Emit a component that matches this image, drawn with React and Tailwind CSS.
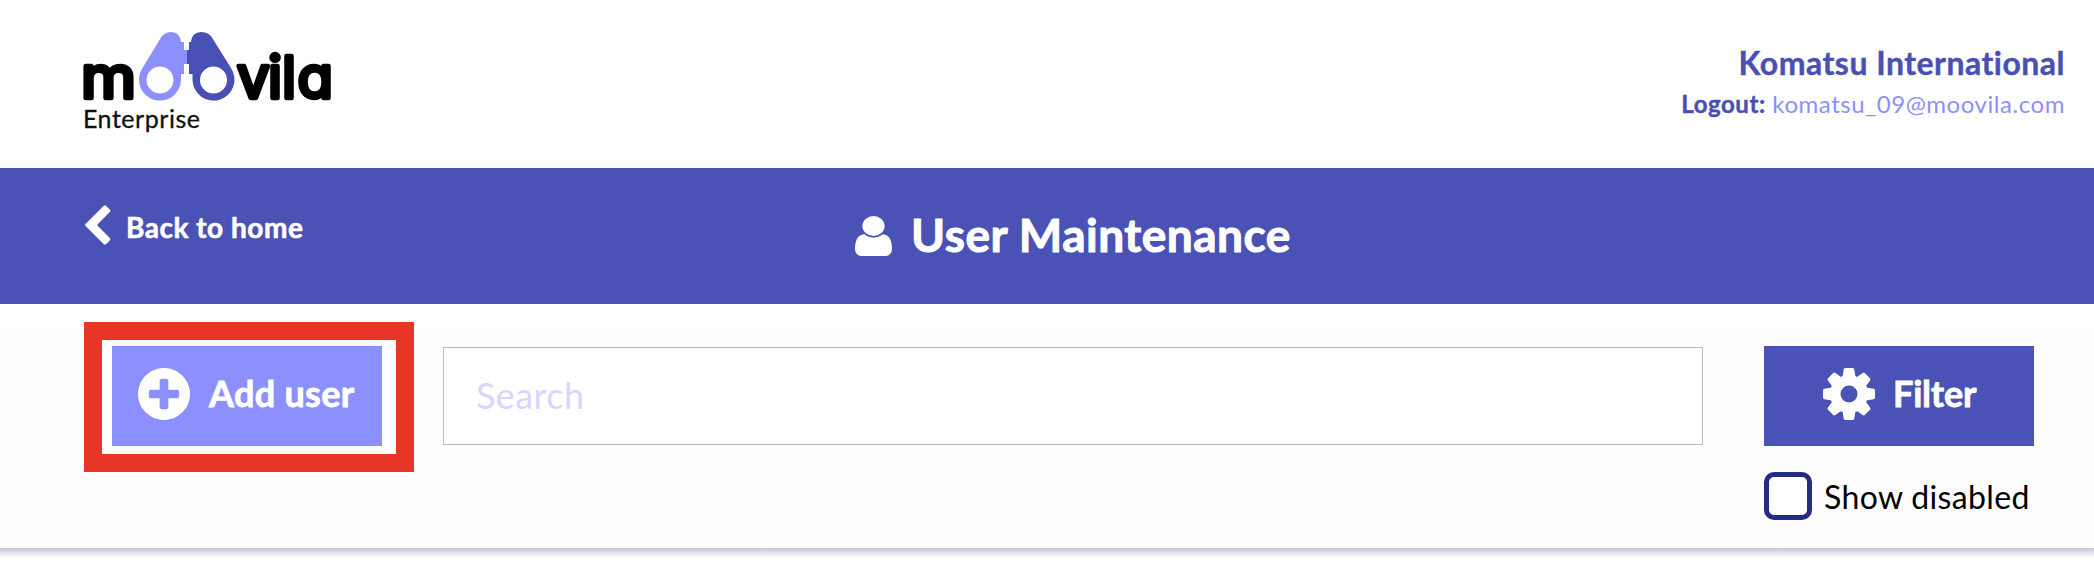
const Icon = ({ d, viewBox, className }) => (
  <svg viewBox={viewBox} className={className} fill="currentColor" aria-hidden="true" preserveAspectRatio="none">
    <path d={d} />
  </svg>
);

const USER =
  'M1536 1399q0 109-62.5 187t-150.5 78h-854q-88 0-150.5-78t-62.5-187q0-85 8.5-160.5t31.5-152 58.5-131 94-89 134.5-34.5q131 128 313 128t313-128q76 0 134.5 34.5t94 89 58.5 131 31.5 152 8.5 160.5zm-256-887q0 159-112.5 271.5t-271.5 112.5-271.5-112.5-112.5-271.5 112.5-271.5 271.5-112.5 271.5 112.5 112.5 271.5z';
const PLUS =
  'M1344 960v-128q0-26-19-45t-45-19h-256v-256q0-26-19-45t-45-19h-128q-26 0-45 19t-19 45v256h-256q-26 0-45 19t-19 45v128q0 26 19 45t45 19h256v256q0 26 19 45t45 19h128q26 0 45-19t19-45v-256h256q26 0 45-19t19-45zm320-64q0 209-103 385.5t-279.5 279.5-385.5 103-385.5-103-279.5-279.5-103-385.5 103-385.5 279.5-279.5 385.5-103 385.5 103 279.5 279.5 103 385.5z';
// One tooth of the symmetric eight-tooth gear, centred on the origin
const TOOTH = 'M-7-14L-5.300-24.500Q-5-26-3.700-26H3.700Q5-26 5.300-24.500L7-14Z';

function Gear({ className }) {
  return (
    <svg viewBox="-26 -26 52 52" className={className} fill="currentColor" aria-hidden="true">
      {[0, 45, 90, 135, 180, 225, 270, 315].map((a) => (
        <path key={a} d={TOOTH} transform={`rotate(${a})`} />
      ))}
      <circle r="13.750" fill="none" stroke="currentColor" strokeWidth="10.500" />
    </svg>
  );
}

function Logo() {
  return (
    <svg viewBox="0 0 252 108" className="h-[108px] w-[252px] overflow-visible" aria-label="moovila Enterprise">
      <g fontFamily="Inter, sans-serif" fontWeight="400" fontSize="58" fill="#000" stroke="#000" strokeWidth="4.500" strokeLinejoin="round" style={{ fontFeatureSettings: '"cv11"' }}>
        <text x="-2" y="68" textLength="55" lengthAdjust="spacingAndGlyphs">m</text>
        <text x="154 185 199 214.500" y="68">vila</text>
      </g>
      <rect x="96" y="21" width="13" height="13" fill="#4950b4" />
      <path fillRule="evenodd" fill="#8c90ff" d="M79 6Q83 2 88 2Q97 2 98 12H101V20H104V34H101V44H98V50A21 21 0 1 1 59.500 38ZM77 36.500A13.500 13.500 0 1 0 77 63.500A13.500 13.500 0 1 0 77 36.500Z" />
      <path fillRule="evenodd" fill="#4950b4" d="M128 6Q124 2 118 2Q109 2 108 12H106V20H104V34H106V44H109.500V50A21 21 0 1 0 148 38ZM130.500 36.500A13.500 13.500 0 1 0 130.500 63.500A13.500 13.500 0 1 0 130.500 36.500Z" />
      <text x="0" y="97.500" fontFamily="Lato, sans-serif" fontWeight="400" fontSize="25" fill="#111" stroke="#111" strokeWidth="0.300" textLength="117">Enterprise</text>
    </svg>
  );
}

export default function App() {
  return (
    <div className="h-[568px] w-[2094px] overflow-hidden bg-white font-['Lato',sans-serif]">
      <header className="flex h-[168px] items-start justify-between pr-[29px] pl-[83px]">
        <div className="pt-[30px]"><Logo /></div>
        <div className="flex flex-col items-end pt-[43px] whitespace-nowrap text-[#4950b4]">
          <div className="text-[32px] leading-[40px] font-bold tracking-[0.48px] [-webkit-text-stroke:0.4px]">Komatsu International</div>
          <div className="mt-px text-2xl leading-[40px] tracking-[0.55px]">
            <span className="font-bold [-webkit-text-stroke:0.4px]">Logout:</span> <span className="text-[#8c90ff]">komatsu_09@moovila.com</span>
          </div>
        </div>
      </header>

      <nav className="grid h-[136px] grid-cols-[855px_1fr] bg-[#4a52b5] whitespace-nowrap text-white">
        <div className="flex items-start pt-[37px] pl-[85px]">
          <svg viewBox="0 0 26 40" className="h-10 w-[26px]" fill="currentColor" aria-hidden="true">
            <path d="M19 .5Q20 0 21 .8L25 4.800Q25.600 6 25 6.800L12 20L25 33.200Q25.600 34.500 25 35.200L21 39.200Q20 40 18.800 39.200L.5 21Q-.2 20 .5 19Z" />
          </svg>
          <span className="mt-[5px] ml-[15px] text-[28px] leading-[34px] font-bold tracking-[0.52px] [-webkit-text-stroke:0.6px]">Back to home</span>
        </div>
        <div className="flex items-start pt-[48px]">
          <Icon d={USER} viewBox="256 128 1280 1536" className="h-10 w-[37px]" />
          <h1 className="-mt-[4px] ml-[19px] text-[46px] leading-[46px] font-bold tracking-[0.5px] [-webkit-text-stroke:1px]">User Maintenance</h1>
        </div>
      </nav>

      <section className="h-[244px] bg-[linear-gradient(#fff_29px,#fbfbfb_29px,#fbfbfb_30px,#fefefe_30px)] pl-[84px]">
        <div className="flex h-full items-start">
          <div className="mt-[18px] h-[150px] w-[330px] border-[18px] border-[#e73526] bg-white pt-[6px] pl-[10px]">
            <button className="flex h-[100px] w-[270px] items-center bg-[#8c90ff] pl-[26px] text-white">
              <Icon d={PLUS} viewBox="128 128 1536 1536" className="-mt-[4px] h-[52px] w-[52px]" />
              <span className="-mt-[7px] ml-[19px] text-4xl font-bold tracking-[0.3px] [-webkit-text-stroke:0.8px]">Add user</span>
            </button>
          </div>
          <input placeholder="Search" className="mt-[43px] ml-[29px] h-[98px] w-[1260px] border border-[#bcbcbc] bg-white pb-[3px] pl-[32px] text-4xl tracking-[0.4px] text-black placeholder:text-[#dbd4ff]" />
          <div className="mt-[42px] ml-[61px] w-[270px]">
            <button className="flex h-[100px] w-[270px] items-center bg-[#4a52b5] pl-[59px] text-white">
              <Gear className="-mt-[4px] h-[52px] w-[52px]" />
              <span className="-mt-[7px] ml-[18px] text-4xl font-bold tracking-[-0.2px] [-webkit-text-stroke:0.8px]">Filter</span>
            </button>
            <label className="mt-[26px] flex items-center whitespace-nowrap">
              <span className="h-12 w-12 shrink-0 rounded-[10px] border-[5px] border-[#252c83] bg-white" />
              <span className="mt-[2px] ml-[12px] text-[32px] leading-[46px] tracking-[0.35px] text-black">Show disabled</span>
            </label>
          </div>
        </div>
      </section>
      <div className="h-[10px] bg-linear-to-b from-[#c0c7d5] to-white" />
    </div>
  );
}
